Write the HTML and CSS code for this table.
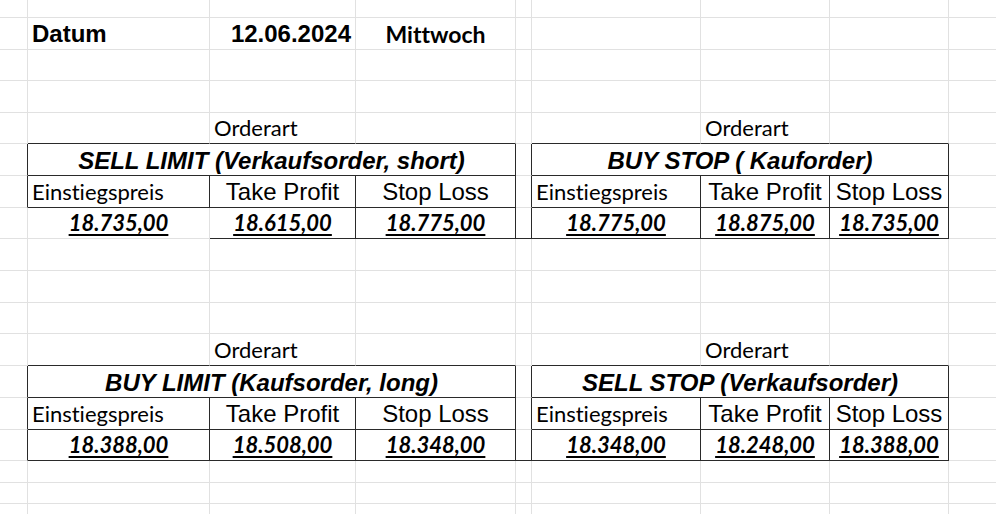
FILE: index.html
```html
<!DOCTYPE html>
<html lang="de">
<head>
<meta charset="utf-8">
<title>Orderarten</title>
<link rel="stylesheet" href="styles.css">
</head>
<body>
<div class="sheet">
  <!-- row 0 -->
  <div class="c"></div><div class="c"></div><div class="c"></div><div class="c"></div><div class="c"></div><div class="c"></div><div class="c"></div><div class="c"></div><div class="c"></div>
  <!-- row 1 -->
  <div class="c"></div>
  <div class="c t-date left"><span class="arial bold">Datum</span></div>
  <div class="c t-date right"><span class="arial bold">12.06.2024</span></div>
  <div class="c t-date center"><span class="cal bold day">Mittwoch</span></div>
  <div class="c"></div><div class="c"></div><div class="c"></div><div class="c"></div><div class="c"></div>
  <!-- row 2 -->
  <div class="c"></div><div class="c"></div><div class="c"></div><div class="c"></div><div class="c"></div><div class="c"></div><div class="c"></div><div class="c"></div><div class="c"></div>
  <!-- row 3 -->
  <div class="c"></div><div class="c"></div><div class="c"></div><div class="c"></div><div class="c"></div><div class="c"></div><div class="c"></div><div class="c"></div><div class="c"></div>
  <!-- row 4 : Orderart -->
  <div class="c"></div>
  <div class="c bb"></div>
  <div class="c bb t-order left"><span class="cal">Orderart</span></div>
  <div class="c bb"></div>
  <div class="c"></div>
  <div class="c bb"></div>
  <div class="c bb t-order left"><span class="cal">Orderart</span></div>
  <div class="c bb"></div>
  <div class="c"></div>
  <!-- row 5 : headers -->
  <div class="c br"></div>
  <div class="c br bb span3 t-head center"><span class="arial bold italic">SELL LIMIT (Verkaufsorder, short)</span></div>
  <div class="c br"></div>
  <div class="c br bb span3 t-head center"><span class="arial bold italic">BUY STOP ( Kauforder)</span></div>
  <div class="c"></div>
  <!-- row 6 : labels -->
  <div class="c br"></div>
  <div class="c br bb t-label left"><span class="cal">Einstiegspreis</span></div>
  <div class="c br bb t-label center"><span class="arial">Take Profit</span></div>
  <div class="c br bb t-label center"><span class="arial">Stop Loss</span></div>
  <div class="c br"></div>
  <div class="c br bb t-label left"><span class="cal">Einstiegspreis</span></div>
  <div class="c br bb t-label center"><span class="arial">Take Profit</span></div>
  <div class="c br bb t-label center"><span class="arial">Stop Loss</span></div>
  <div class="c"></div>
  <!-- row 7 : values -->
  <div class="c"></div>
  <div class="c t-value center"><span class="cal value">18.735,00</span></div>
  <div class="c br bb t-value center"><span class="cal value">18.615,00</span></div>
  <div class="c br bb t-value center"><span class="cal value">18.775,00</span></div>
  <div class="c br bb"></div>
  <div class="c br bb t-value center"><span class="cal value">18.775,00</span></div>
  <div class="c br bb t-value center"><span class="cal value">18.875,00</span></div>
  <div class="c br bb t-value center"><span class="cal value">18.735,00</span></div>
  <div class="c"></div>
  <!-- row 8 -->
  <div class="c"></div><div class="c"></div><div class="c"></div><div class="c"></div><div class="c"></div><div class="c"></div><div class="c"></div><div class="c"></div><div class="c"></div>
  <!-- row 9 -->
  <div class="c"></div><div class="c"></div><div class="c"></div><div class="c"></div><div class="c"></div><div class="c"></div><div class="c"></div><div class="c"></div><div class="c"></div>
  <!-- row 10 -->
  <div class="c"></div><div class="c"></div><div class="c"></div><div class="c"></div><div class="c"></div><div class="c"></div><div class="c"></div><div class="c"></div><div class="c"></div>
  <!-- row 11 : Orderart -->
  <div class="c"></div>
  <div class="c bb"></div>
  <div class="c bb t-order left"><span class="cal">Orderart</span></div>
  <div class="c bb"></div>
  <div class="c"></div>
  <div class="c bb"></div>
  <div class="c bb t-order left"><span class="cal">Orderart</span></div>
  <div class="c bb"></div>
  <div class="c"></div>
  <!-- row 12 : headers -->
  <div class="c br"></div>
  <div class="c br bb span3 t-head center"><span class="arial bold italic">BUY LIMIT (Kaufsorder, long)</span></div>
  <div class="c br"></div>
  <div class="c br bb span3 t-head center"><span class="arial bold italic">SELL STOP (Verkaufsorder)</span></div>
  <div class="c"></div>
  <!-- row 13 : labels -->
  <div class="c br"></div>
  <div class="c br bb t-label left"><span class="cal">Einstiegspreis</span></div>
  <div class="c br bb t-label center"><span class="arial">Take Profit</span></div>
  <div class="c br bb t-label center"><span class="arial">Stop Loss</span></div>
  <div class="c br"></div>
  <div class="c br bb t-label left"><span class="cal">Einstiegspreis</span></div>
  <div class="c br bb t-label center"><span class="arial">Take Profit</span></div>
  <div class="c br bb t-label center"><span class="arial">Stop Loss</span></div>
  <div class="c"></div>
  <!-- row 14 : values -->
  <div class="c br"></div>
  <div class="c br bb t-value center"><span class="cal value">18.388,00</span></div>
  <div class="c br bb t-value center"><span class="cal value">18.508,00</span></div>
  <div class="c br bb t-value center"><span class="cal value">18.348,00</span></div>
  <div class="c br bb"></div>
  <div class="c br bb t-value center"><span class="cal value">18.348,00</span></div>
  <div class="c br bb t-value center"><span class="cal value">18.248,00</span></div>
  <div class="c br bb t-value center"><span class="cal value">18.388,00</span></div>
  <div class="c"></div>
  <!-- row 15 -->
  <div class="c"></div><div class="c"></div><div class="c"></div><div class="c"></div><div class="c"></div><div class="c"></div><div class="c"></div><div class="c"></div><div class="c"></div>
  <!-- row 16 -->
  <div class="c"></div><div class="c"></div><div class="c"></div><div class="c"></div><div class="c"></div><div class="c"></div><div class="c"></div><div class="c"></div><div class="c"></div>
  <!-- row 17 -->
  <div class="c"></div><div class="c"></div><div class="c"></div><div class="c"></div><div class="c"></div><div class="c"></div><div class="c"></div><div class="c"></div><div class="c"></div>
</div>
</body>
</html>
```
FILE: styles.css
```css
* { box-sizing: border-box; }
html, body { margin: 0; padding: 0; background: #ffffff; }
body { font-family: "Liberation Sans", Arial, sans-serif; color: #000; }

.sheet {
  display: grid;
  grid-template-columns: 28px 182px 146px 160px 16px 169px 129px 119px 48px;
  grid-template-rows: 18px 32px 31px 32px 31px 32px 32px 31px 32px 32px 31px 32px 32px 32px 31px 22px 21px 11px;
  width: 996px;
  height: 514px;
  overflow: hidden;
}

.c {
  border-right: 1px solid #e1e1e1;
  border-bottom: 1px solid #e1e1e1;
  display: flex;
  align-items: flex-end;
  white-space: nowrap;
  min-width: 0;
}
.br { border-right-color: #2a2a2a; }
.bb { border-bottom-color: #2a2a2a; }
.span3 { grid-column: span 3; }

.left { justify-content: flex-start; padding-left: 4px; }
.center { justify-content: center; }
.right { justify-content: flex-end; padding-right: 4px; }

.arial { font-family: "Liberation Sans", Arial, sans-serif; font-size: 24px; line-height: 24px; }
.cal {
  font-family: Lato, "Liberation Sans", sans-serif;
  font-size: 22px;
  line-height: 24px;
  font-variant-ligatures: none;
}
.day { font-size: 23px; }
.bold { font-weight: 700; }
.italic { font-style: italic; }
.value {
  font-weight: 700;
  font-style: italic;
  text-decoration: underline;
  text-decoration-thickness: 2px;
  text-underline-offset: 3px;
  font-size: 22px;
}

.t-date { padding-bottom: 3px; }
.t-order { padding-bottom: 3px; }
.t-head { padding-bottom: 2px; }
.t-label { padding-bottom: 3px; }
.t-value { padding-bottom: 3px; }
```
